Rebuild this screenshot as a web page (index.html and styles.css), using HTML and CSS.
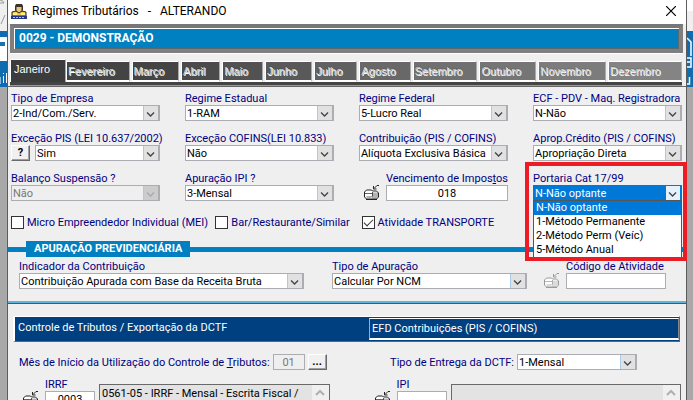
FILE: index.html
```
<!doctype html>
<html lang="pt-BR">
<head>
    <meta charset="utf-8"/>
    <meta content="width=device-width, initial-scale=1" name="viewport"/>

    <title>Regimes Tributários</title>

    <link rel="stylesheet" href="styles.css">
</head>
<body>
    <svg class="symbols" aria-hidden="true">
        <symbol id="chevron" viewBox="0 0 16 14">
            <path d="M3.500 6.500l4 4 4-4" fill="none" stroke="currentColor" stroke-width="1.5"/>
        </symbol>
        <symbol id="folder" viewBox="0 0 17 17">
            <path d="M1.500 8l2-2h5l1 1h4l2 2v4l-2 2h-10l-2-2z" fill="#fff" stroke="currentColor"/>
            <path d="M9 8.500h6v4l-2 2h-4z" fill="currentColor" opacity=".35"/>
            <path d="M2 9.500h7M9.500 8v4l-1 1h-5" fill="none" stroke="currentColor" opacity=".7"/>
            <path d="M3 15.500h11" stroke="currentColor"/>
            <path d="M16 1.500h-2l-3 3M10.500 2v3h3" fill="none" stroke="currentColor"/>
        </symbol>
    </svg>

    <div class="desktop">
        <div class="behind">
            <svg width="7" height="88" viewBox="0 0 7 88" aria-hidden="true">
                <rect width="7" height="31" fill="#efefef"/>
                <path d="M0 0q4 1 4 3H0M1 24l4-9" fill="none" stroke="#9a9a9a"/>
                <rect y="31" width="7" height="56" fill="#0f6cae"/>
                <path d="M0 37h7v24H0z" fill="#fff"/>
                <path d="M0 42h5v4H0z" fill="#1672b3"/>
                <path d="M0 84V77M3.500 76v7M3.500 73v1M6.500 73v10" fill="none" stroke="#fff"/>
            </svg>
        </div>

        <main class="dialog">
            <header class="titlebar">
                <svg width="16" height="16" viewBox="0 0 16 16" aria-hidden="true">
                    <path d="M5 1h6l1 2v4l-1 2H5L4 7V3z" fill="#3b3424"/>
                    <path d="M5.500 4h5v3.500l-1 1.500h-3l-1-1.500z" fill="#e8c48c"/>
                    <path d="M1 9l4-1 3 2 3-2 4 1v4H1z" fill="#f1d33a" stroke="#222"/>
                    <path d="M2 11h4M10 11h4" stroke="#fff"/>
                    <path d="M0 13h16v3H0z" fill="#25358c"/>
                    <path d="M2 14.500h12" stroke="#e0c95b" stroke-dasharray="2 1"/>
                </svg>
                <h1>Regimes Tributários &nbsp; - &nbsp; ALTERANDO</h1>
                <button class="close" type="button" aria-label="Fechar">
                    <svg width="10" height="10" viewBox="0 0 10 10"><path d="M0 0l10 10M10 0L0 10" stroke="#000" stroke-width="1.2"/></svg>
                </button>
            </header>

            <div class="company">0029 - DEMONSTRAÇÃO</div>

            <div class="months" role="tablist">
                <button role="tab" aria-selected="true">Janeiro</button>
                <button role="tab">Fevereiro</button>
                <button role="tab">Março</button>
                <button role="tab">Abril</button>
                <button role="tab">Maio</button>
                <button role="tab">Junho</button>
                <button role="tab">Julho</button>
                <button role="tab">Agosto</button>
                <button role="tab">Setembro</button>
                <button role="tab">Outubro</button>
                <button role="tab">Novembro</button>
                <button role="tab">Dezembro</button>
            </div>

            <form>
                <div class="regimes">
                    <div class="field">
                        <label for="empresa">Tipo de Empresa</label>
                        <div class="combo"><select id="empresa"><option>2-Ind/Com./Serv.</option></select><svg><use href="#chevron"/></svg></div>
                    </div>
                    <div class="field">
                        <label for="estadual">Regime Estadual</label>
                        <div class="combo"><select id="estadual"><option>1-RAM</option></select><svg><use href="#chevron"/></svg></div>
                    </div>
                    <div class="field">
                        <label for="federal">Regime Federal</label>
                        <div class="combo"><select id="federal"><option>5-Lucro Real</option></select><svg><use href="#chevron"/></svg></div>
                    </div>
                    <div class="field">
                        <label for="ecf">ECF - PDV - Maq. Registradora</label>
                        <div class="combo"><select id="ecf"><option>N-Não</option></select><svg><use href="#chevron"/></svg></div>
                    </div>

                    <div class="field">
                        <label for="pis">Exceção PIS (LEI 10.637/2002)</label>
                        <div class="line">
                            <button class="small" type="button">?</button>
                            <div class="combo"><select id="pis"><option>Sim</option></select><svg><use href="#chevron"/></svg></div>
                        </div>
                    </div>
                    <div class="field">
                        <label for="cofins">Exceção COFINS(LEI 10.833)</label>
                        <div class="combo"><select id="cofins"><option>Não</option></select><svg><use href="#chevron"/></svg></div>
                    </div>
                    <div class="field">
                        <label for="contribuicao">Contribuição (PIS / COFINS)</label>
                        <div class="combo"><select id="contribuicao"><option>Alíquota Exclusiva Básica</option></select><svg><use href="#chevron"/></svg></div>
                    </div>
                    <div class="field">
                        <label for="credito">Aprop.Crédito (PIS / COFINS)</label>
                        <div class="combo"><select id="credito"><option>Apropriação Direta</option></select><svg><use href="#chevron"/></svg></div>
                    </div>

                    <div class="field">
                        <label for="balanco">Balanço Suspensão ?</label>
                        <div class="combo off"><select id="balanco" disabled><option>Não</option></select><svg><use href="#chevron"/></svg></div>
                    </div>
                    <div class="field">
                        <label for="ipi-apuracao">Apuração IPI ?</label>
                        <div class="combo"><select id="ipi-apuracao"><option>3-Mensal</option></select><svg><use href="#chevron"/></svg></div>
                    </div>
                    <div class="lookup">
                        <button type="button" aria-label="Pesquisar vencimento"><svg><use href="#folder"/></svg></button>
                        <div class="field">
                            <label for="vencimento">Vencimento de Impos<u>t</u>os</label>
                            <input class="center" id="vencimento" type="text" value="018">
                        </div>
                    </div>
                    <div class="field marked">
                        <label for="portaria">Portaria Cat 17/99</label>
                        <div class="combo open"><select id="portaria"><option>N-Não optante</option></select><svg><use href="#chevron"/></svg></div>
                        <ul class="options" role="listbox" aria-label="Portaria Cat 17/99">
                            <li role="option" aria-selected="true">N-Não optante</li>
                            <li role="option">1-Método Permanente</li>
                            <li role="option">2-Método Perm (Veíc)</li>
                            <li role="option">5-Método Anual</li>
                        </ul>
                    </div>
                </div>

                <div class="checks">
                    <label><input type="checkbox">Micro Empreendedor Individual (MEI)</label>
                    <label><input type="checkbox">Bar/Restaurante/Similar</label>
                    <label><input type="checkbox" checked>Atividade TRANSPORTE</label>
                </div>

                <h2><span>APURAÇÃO PREVIDENCIÁRIA</span></h2>
                <div class="previdencia">
                    <div class="field">
                        <label for="indicador">Indicador da Contribuição</label>
                        <div class="combo"><select id="indicador"><option>Contribuição Apurada com Base da Receita Bruta</option></select><svg><use href="#chevron"/></svg></div>
                    </div>
                    <div class="field">
                        <label for="apuracao">Tipo de Apuração</label>
                        <div class="combo"><select id="apuracao"><option>Calcular Por NCM</option></select><svg><use href="#chevron"/></svg></div>
                    </div>
                    <div class="lookup off">
                        <button type="button" disabled aria-label="Pesquisar atividade"><svg><use href="#folder"/></svg></button>
                        <div class="field">
                            <label for="atividade">Código de Atividade</label>
                            <input id="atividade" type="text">
                        </div>
                    </div>
                </div>

                <div class="sections" role="tablist">
                    <button type="button" role="tab" aria-selected="true">Controle de Tributos / Exportação da DCTF</button>
                    <button type="button" role="tab">EFD Contribuições (PIS / COFINS)</button>
                </div>

                <div class="dctf">
                    <div class="line">
                        <label for="mes">Mês de Início da Utilização do Controle de <u>T</u>ributos:</label>
                        <input class="center month" id="mes" type="text" value="01" disabled>
                        <button class="small" type="button">...</button>
                    </div>
                    <div class="line">
                        <label for="entrega">Tipo de Entrega da DCTF:</label>
                        <div class="combo delivery"><select id="entrega"><option>1-Mensal</option></select><svg><use href="#chevron"/></svg></div>
                    </div>
                </div>

                <div class="taxes">
                    <div class="tax">
                        <div class="lookup">
                            <button type="button" aria-label="Pesquisar IRRF"><svg><use href="#folder"/></svg></button>
                            <div class="field">
                                <label for="irrf">IRRF</label>
                                <input class="center" id="irrf" type="text" value="0003">
                            </div>
                        </div>
                        <div class="memo">
                            <textarea readonly aria-label="Descrição IRRF">0561-05 - IRRF - Mensal - Escrita Fiscal /</textarea>
                            <svg><path d="M4 10l4-4 4 4" fill="none" stroke="#b0b0b0" stroke-width="2"/></svg>
                        </div>
                    </div>
                    <div class="tax">
                        <div class="lookup">
                            <button type="button" aria-label="Pesquisar IPI"><svg><use href="#folder"/></svg></button>
                            <div class="field">
                                <label for="ipi">IPI</label>
                                <input class="center" id="ipi" type="text">
                            </div>
                        </div>
                        <div class="memo">
                            <textarea readonly aria-label="Descrição IPI"></textarea>
                            <svg><path d="M4 10l4-4 4 4" fill="none" stroke="#b0b0b0" stroke-width="2"/></svg>
                        </div>
                    </div>
                </div>
            </form>
        </main>

        <div class="behind">
            <svg width="7" height="88" viewBox="0 0 7 88" aria-hidden="true">
                <rect width="7" height="11" fill="#fff"/>
                <rect y="11" width="7" height="20" fill="#efefef"/>
                <rect y="31" width="7" height="56" fill="#0f6cae"/>
                <path d="M0 38l4 4v14M0 58h4v9H0M0 62h3M2.500 77v7H0" fill="none" stroke="#fff" stroke-width="1.500"/>
            </svg>
        </div>
    </div>
</body>
</html>
```
FILE: styles.css
```
* {
    box-sizing: border-box;
}
body {
    margin: 0;
    overflow: hidden;
    font: 11px/13px Roboto, "Liberation Sans", Arial, sans-serif;
    color: #000;
}
button, input, select, textarea {
    font: inherit;
    color: inherit;
    margin: 0;
    border-radius: 0;
}
svg {
    display: block;
    flex: none;
}
.symbols {
    position: absolute;
    width: 0;
    height: 0;
}
label {
    color: #000080;
    white-space: nowrap;
}

/* window */
.desktop {
    display: flex;
    height: 100vh;
    overflow: hidden;
}
.behind {
    flex: none;
    width: 7px;
    background: #a8a8a8;
}
.behind + .dialog + .behind {
    width: 6px;
}
.dialog {
    flex: 1;
    min-width: 0;
    background: #efefef;
    border: solid #5c5c5c;
    border-width: 0 1px;
}
.titlebar {
    display: flex;
    align-items: center;
    height: 24px;
    padding: 0 10px 2px 3px;
    background: #fff;
}
h1 {
    flex: 1;
    margin: 0 0 0 5px;
    font: 12px/20px Roboto, "Noto Sans", sans-serif;
}
.close {
    padding: 0;
    border: none;
    background: none;
}
.company {
    margin: 0 3px 0 2px;
    padding: 0 5px;
    border: 4px solid #7f7f7f;
    border-top-color: #777;
    box-shadow: 0 1px #fff, inset 1px 1px #fff, inset -1px -1px #5c6870;
    background: #0080c0;
    color: #fff;
    font: bold 12px/21px Roboto, "Liberation Sans", sans-serif;
}

/* month tabs */
.months {
    display: flex;
    align-items: flex-end;
    margin: 6px 4px 0 2px;
    border-bottom: 3px solid #444;
    box-shadow: 0 1px #999;
    font-family: "Liberation Sans", Arial, sans-serif;
}
.months button {
    height: 21px;
    margin-left: 2px;
    padding: 1px 14px 0 1px;
    border: solid #fff;
    border-width: 1px 1px 2px;
    border-right-color: #aaa;
    background: #444;
    color: #d8d8d8;
    text-align: left;
    text-shadow: 1px 1px #fff, 0 0 1px #222;
}
.months button[aria-selected=true] {
    height: 23px;
    margin: 0;
    padding: 0 15px 3px 3px;
    border-bottom: none;
    background: #3c3c3c;
    color: #fff;
    text-shadow: none;
}
.months button:nth-child(2) { margin-left: 0; }
.months button:nth-child(4) { background: #4b4b4b; }
.months button:nth-child(5) { background: #525252; }
.months button:nth-child(6) { background: #595959; }
.months button:nth-child(7) { background: #606060; }
.months button:nth-child(8) { background: #686868; }
.months button:nth-child(9) { background: #707070; }
.months button:nth-child(10) { background: #757575; }
.months button:nth-child(11) { background: #7c7c7c; }
.months button:nth-child(12) { background: #848484; flex: 1; }

/* fields */
.field {
    display: flex;
    flex-direction: column;
    flex: 1;
    min-width: 0;
}
.line {
    display: flex;
    align-items: center;
}
.line .combo {
    flex: 1;
}
.combo {
    display: flex;
    height: 16px;
    border: 1px solid #abadb3;
    background: #fff;
}
.combo select {
    flex: 1;
    min-width: 0;
    padding: 0 1px;
    border: none;
    background: none;
    appearance: none;
}
.combo svg {
    width: 16px;
    height: 14px;
    border: solid #abadb3;
    border-width: 0 1px;
    border-left-color: #a9cbe8;
    background: #e1e1e1;
    color: #444;
}
.combo.off {
    background: #efefef;
    color: #777;
}
.combo.off svg {
    background: #ccc;
    color: #aaa;
}
.combo.off select {
    opacity: 1;
}
.combo.open {
    border-color: #0078d7;
    color: #fff;
}
.combo.open select {
    background: #0078d7;
}
.combo.open svg {
    border-color: #0078d7;
    background: #e5f1fb;
}
input[type=text] {
    width: 100%;
    height: 16px;
    padding: 0 3px;
    border: 1px solid #abadb3;
    background: #fff;
}
input[type=text]:disabled {
    background: #efefef;
    color: #777;
}
.center {
    text-align: center;
}
.small {
    width: 19px;
    height: 16px;
    padding: 0;
    border: 1px solid #fff;
    border-right-color: #696969;
    border-bottom-color: #696969;
    box-shadow: inset -1px -1px #a0a0a0;
    background: #f0f0f0;
    font-weight: bold;
    line-height: 12px;
}
.lookup {
    display: flex;
    align-items: flex-end;
    gap: 6px;
}
.lookup button {
    padding: 0;
    border: none;
    background: none;
    color: #222;
}
.lookup button svg {
    width: 17px;
    height: 17px;
}
.lookup.off button {
    color: #999;
}

.regimes {
    display: grid;
    grid-template-columns: repeat(4, 1fr);
    gap: 11px 25px;
    margin-top: 1px;
    padding: 5px 4px 0 3px;
    border-top: 1px solid #666;
}
.regimes .line {
    gap: 5px;
}
.regimes .lookup {
    padding-left: 4px;
}

/* open drop-down and the red frame round it */
.marked {
    position: relative;
}
.marked::after {
    content: '';
    position: absolute;
    inset: -10px -5px -60px -8px;
    border: 4px solid #ed1c24;
    pointer-events: none;
    z-index: 2;
}
.options {
    position: absolute;
    top: 28px;
    left: 0;
    right: 0;
    z-index: 1;
    margin: 0;
    padding: 0;
    border: 1px solid #555;
    background: #fff;
    list-style: none;
}
.options li {
    height: 14px;
    padding: 0 2px;
    line-height: 14px;
}
.options [aria-selected=true] {
    background: #0078d7;
    color: #fff;
}

.checks {
    display: grid;
    grid-template-columns: 204fr 146fr 321fr;
    margin: 15px 3px 12px;
}
.checks label {
    display: flex;
    align-items: center;
    gap: 3px;
}
.checks input {
    appearance: none;
    width: 13px;
    height: 13px;
    border: 1px solid #333;
    background: #fff;
}
.checks input:checked::after {
    content: '';
    display: block;
    width: 8px;
    height: 4px;
    margin: 2px 1px;
    border: solid #333;
    border-width: 0 0 1px 1px;
    transform: rotate(-45deg);
}

h2 {
    display: flex;
    align-items: center;
    margin: 0;
    color: #fff;
    font: bold 11px/16px Roboto, "Liberation Sans", sans-serif;
}
h2 span {
    padding: 0 8px;
    background: #0080c0;
}
h2::before, h2::after {
    content: '';
    height: 4px;
    background: #0080c0;
    border-top: 1px solid #3a7391;
}
h2::before {
    width: 18px;
}
h2::after {
    flex: 1;
}
.previdencia {
    display: grid;
    grid-template-columns: 297fr 195fr 123fr;
    gap: 16px;
    padding: 3px 20px 14px 11px;
    border-bottom: 1px solid #555;
    box-shadow: inset 0 -2px #5fb4de;
}
.previdencia .field:first-child {
    padding-right: 12px;
}

/* lower tabs */
.sections {
    display: flex;
    align-items: center;
    margin: 12px 6px 0 5px;
    border: 1px solid #fff;
    border-left-width: 2px;
    border-bottom: 1px solid #666;
    border-right-color: #666;
    background: #004080;
}
.sections button {
    flex: 355;
    height: 24px;
    padding: 0 3px 4px;
    border: none;
    background: none;
    color: #fff;
    text-align: left;
}
.sections button + button {
    flex: 310;
    height: 22px;
    padding: 0 2px;
    border: solid #fff;
    border-width: 1px 1px 2px;
    border-color: #fff #888 #fff #aaa;
}
.dctf {
    display: flex;
    justify-content: space-between;
    padding: 12px 49px 0 11px;
}
.dctf .line {
    gap: 3px;
}
.dctf input.month {
    width: 32px;
}
.dctf .delivery {
    width: 120px;
}
.taxes {
    display: grid;
    grid-template-columns: 1fr 1fr;
    gap: 44px;
    padding: 8px 5px 0 14px;
}
.tax {
    display: flex;
    gap: 4px;
}
.tax .lookup {
    flex: none;
    width: 73px;
    align-self: flex-start;
}
.memo {
    display: flex;
    flex: 1;
    height: 40px;
    margin-top: 6px;
    border: 1px solid #696969;
    background: #e3e3e3;
}
.memo textarea {
    flex: 1;
    min-width: 0;
    padding: 2px;
    border: none;
    background: none;
    overflow: hidden;
    resize: none;
}
.memo svg {
    width: 17px;
    height: 38px;
    background: #f0f0f0;
}
```
